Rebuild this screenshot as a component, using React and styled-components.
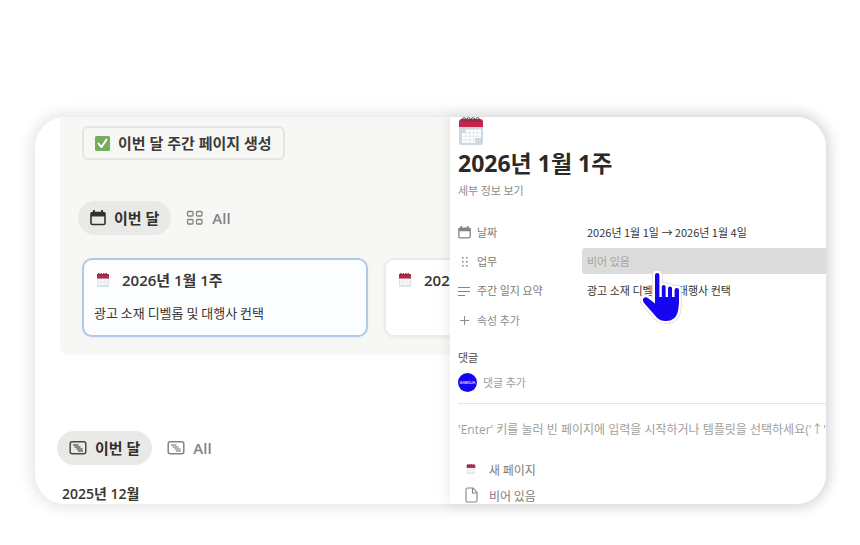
import styled, { createGlobalStyle, css } from "styled-components";

const GlobalStyle = createGlobalStyle`
    * {
        box-sizing: border-box;
    }
    body {
        margin: 0;
        background: #ffffff;
        color: #373530;
        font-family: "Open Sans", "Noto Sans CJK KR", sans-serif;
    }
    button {
        font-family: inherit;
        border: none;
        background: none;
        padding: 0;
        cursor: pointer;
    }
    h1, h2, h3, p, dl, dt, dd, ul {
        margin: 0;
        padding: 0;
    }
    svg {
        display: block;
        flex: none;
    }
`

const Page = styled.main`
    padding: 117px 34px 41px 35px;
`

const Frame = styled.div`
    display: grid;
    grid-template-columns: 415fr 376fr;
    height: 387px;
    border-radius: 30px;
    background: #ffffff;
    box-shadow: 0 0 14px 4px rgba(0, 0, 0, 0.1);
`

const Board = styled.section`
    min-width: 0;
    overflow: hidden;
    border-radius: 30px 0 0 30px;
`

const Callout = styled.div`
    margin-left: 25px;
    height: 238px;
    padding: 9px 0 0 22px;
    background: #f7f7f6;
    border-radius: 0 0 0 8px;
`

const CreateButton = styled.button`
    display: flex;
    align-items: center;
    gap: 8px;
    height: 34px;
    padding: 0 11px;
    border: 2px solid #e5e5e2;
    border-radius: 6px;
    color: #3b3a38;
    font-size: 15px;
    line-height: 20px;
    font-weight: 600;
    white-space: nowrap;
`

const Tabs = styled.div`
    display: flex;
    align-items: center;
    gap: 15px;
    margin: ${p => p.$margin};
`

const Tab = styled.button`
    display: flex;
    align-items: center;
    gap: 8px;
    height: 34px;
    color: #85837f;
    font-size: 15px;
    line-height: 20px;
    font-weight: 600;
    ${p => p.$active && css`
        padding: 0 12px;
        border-radius: 17px;
        background: #e9e9e7;
        color: #32302c;
    `}
`

const Cards = styled.div`
    display: flex;
    gap: 16px;
    margin-top: 23px;
`

const Card = styled.article`
    flex: none;
    width: 286px;
    height: 79px;
    padding: 10px;
    border: 2px solid ${p => (p.$selected ? "#afcae4" : "#ececea")};
    border-radius: 10px;
    background: ${p => (p.$selected ? "#fbfdff" : "#ffffff")};
    box-shadow: 0 1px 3px rgba(0, 0, 0, 0.05);
`

const CardTitle = styled.h3`
    display: flex;
    align-items: center;
    gap: 12px;
    padding-left: 2px;
    font-size: 15px;
    line-height: 20px;
    font-weight: 600;
    white-space: nowrap;
`

const CardText = styled.p`
    margin-top: 13px;
    font-family: "Noto Sans CJK KR", sans-serif;
    font-size: 13px;
    line-height: 20px;
`

const GroupTitle = styled.h2`
    margin-left: 27px;
    font-size: 14px;
    line-height: 20px;
    font-weight: 600;
`

const Peek = styled.aside`
    position: relative;
    min-width: 0;
    padding-left: 8px;
    border-radius: 0 30px 30px 0;
    background: #ffffff;
    box-shadow: 0 0 14px 2px rgba(0, 0, 0, 0.08);
    overflow: hidden;
    color: #7d7b77;
    font-family: "Noto Sans CJK KR", sans-serif;
`

const PageTitle = styled.h1`
    margin-top: 2px;
    color: #2b2a28;
    font-family: "Open Sans", "Noto Sans CJK KR", sans-serif;
    font-size: 23px;
    line-height: 32px;
    font-weight: 700;
    white-space: nowrap;
`

const DetailsButton = styled.button`
    display: block;
    margin-top: 1px;
    color: #8f8d89;
    font-size: 11px;
    line-height: 20px;
`

const Properties = styled.dl`
    display: grid;
    grid-template-columns: 124px 1fr;
    grid-auto-rows: 26px;
    row-gap: 3px;
    margin-top: 19px;
`

const PropertyName = styled.dt`
    display: flex;
    align-items: center;
    gap: 6px;
    font-size: 11px;
`

const PropertyValue = styled.dd`
    position: relative;
    display: flex;
    align-items: center;
    min-width: 0;
    padding-left: 5px;
    border-radius: 3px 0 0 3px;
    background: ${p => (p.$hover ? "#dcdcdc" : "none")};
    color: ${p => (p.$hover ? "#a5a39f" : "#373530")};
    font-size: 11px;
    white-space: nowrap;
`

const AddButton = styled.button`
    display: flex;
    align-items: center;
    gap: 6px;
    height: 26px;
    margin-top: 4px;
    color: #8f8d89;
    font-size: 11px;
`

const CommentTitle = styled.h2`
    margin-top: 14px;
    color: #6b6965;
    font-size: 11px;
    line-height: 20px;
    font-weight: 500;
`

const CommentRow = styled.div`
    display: flex;
    align-items: center;
    gap: 6px;
    height: 30px;
    font-size: 11px;
`

const Avatar = styled.span`
    display: flex;
    align-items: center;
    justify-content: center;
    width: 19px;
    height: 19px;
    border-radius: 50%;
    background: #1505f0;
    color: #d5d2ff;
    font-size: 4px;
    font-weight: 700;
`

const CommentInput = styled.input`
    flex: 1;
    min-width: 0;
    padding: 0;
    border: none;
    outline: none;
    background: none;
    font: inherit;
    &::placeholder {
        color: #a09e9a;
        opacity: 1;
    }
`

const Divider = styled.hr`
    height: 1px;
    margin: 6px 0 0;
    border: none;
    background: #e6e6e5;
`

const Hint = styled.p`
    margin-top: 16px;
    overflow: hidden;
    color: #a09e9a;
    font-family: "Open Sans", "Noto Sans CJK KR", sans-serif;
    font-size: 12px;
    line-height: 20px;
    white-space: nowrap;
`

const Templates = styled.ul`
    margin-top: 16px;
    list-style: none;
`

const Template = styled.button`
    display: grid;
    grid-template-columns: 26px auto;
    justify-items: center;
    align-items: center;
    gap: 5px;
    height: 26px;
    color: #7d7b77;
    font-size: 12px;
`

const Pointer = styled.svg`
    position: absolute;
    z-index: 1;
    top: 22px;
    left: 57px;
`

const CheckIcon = () => (
    <svg width="15" height="15" viewBox="0 0 15 15">
        <rect width="15" height="15" rx="1.5" fill="#77ac5f" />
        <path d="M3.5 7.6l3 3.4 5-7.4" fill="none" stroke="#ffffff" strokeWidth="2" strokeLinecap="round" strokeLinejoin="round" />
    </svg>
)

const CalendarIcon = ({ size = 16, color = "#32302c" }) => (
    <svg width={size} height={size} viewBox="0 0 16 16" fill="none" stroke={color}>
        <rect x="1" y="2.5" width="14" height="12" rx="1.5" strokeWidth="1.6" />
        <path d="M1 4.5h14" strokeWidth="4" />
        <path d="M4 0v3M12 0v3" strokeWidth="1.8" />
    </svg>
)

const GridIcon = () => (
    <svg width="18" height="16" viewBox="0 0 18 16" fill="none" stroke="#85837f" strokeWidth="1.3">
        <rect x="1.500" y="1.500" width="5.500" height="4.500" rx="1" />
        <rect x="10.500" y="1.500" width="5.500" height="4.500" rx="1" />
        <rect x="1.500" y="9.500" width="5.500" height="4.500" rx="1" />
        <rect x="10.500" y="9.500" width="5.500" height="4.500" rx="1" />
    </svg>
)

const TimelineIcon = ({ color }) => (
    <svg width="18" height="16" viewBox="0 0 18 16" fill="none" stroke={color}>
        <rect x="1.2" y="1.8" width="15.600" height="12" rx="2" strokeWidth="1.5" />
        <path d="M4 5h5.500M5.500 7h6M7.500 9h6M9 11h5" strokeWidth="2" opacity="0.6" />
    </svg>
)

const CalendarEmoji = ({ size }) => (
    <svg width={size} height={size * 28 / 26} viewBox="0 0 26 28">
        <rect x="1" y="3" width="24" height="25" rx="2.5" fill="#cfd8de" />
        <path d="M1 10V5q0-3 3-3h18q3 0 3 3v5z" fill="#c3264a" />
        <path d="M8 12.5h15v8.5h-6v5H4V16h4z" fill="#ffffff" />
        <path d="M4 15.8h19M4 19.3h19M4 22.8h13M7.8 12v14M11.6 12v14M15.4 12v14M19.2 12v9" stroke="#dbe2e6" strokeWidth="0.7" />
        <g fill="none" stroke="#5c3c49" strokeWidth="1">
            <circle cx="6" cy="2.5" r="1.8" />
            <circle cx="10.5" cy="2.5" r="1.8" />
            <circle cx="15" cy="2.5" r="1.8" />
            <circle cx="19.5" cy="2.5" r="1.8" />
        </g>
    </svg>
)

const SmallCalendar = ({ size }) => (
    <svg width={size} height={size} viewBox="0 0 14 14">
        <rect x="1" y="1" width="12" height="13" rx="1" fill="#dfe2e5" />
        <path d="M2 6h10v6H2z" fill="#f6f7f8" />
        <path d="M2 9h10M5 6v6M9 6v6" stroke="#e3e6e8" strokeWidth="0.6" />
        <path d="M1 5.500V1h12v4.500z" fill="#b02b48" />
        <path d="M2 1h10" stroke="#6d2639" strokeWidth="1.4" strokeDasharray="1.500 1" />
    </svg>
)

const DotsIcon = () => (
    <svg width="13" height="13" viewBox="0 0 13 13" fill="#85837f">
        <path d="M4 2h1.600v1.600H4zM8 2h1.600v1.600H8zM4 6h1.600v1.600H4zM8 6h1.600v1.600H8zM4 10h1.600v1.600H4zM8 10h1.600v1.600H8z" />
    </svg>
)

const LinesIcon = () => (
    <svg width="13" height="13" viewBox="0 0 13 13" stroke="#85837f" strokeWidth="1.2">
        <path d="M0 3.500h12M0 7.500h12M0 11.500h7" />
    </svg>
)

const PlusIcon = () => (
    <svg width="13" height="13" viewBox="0 0 13 13" stroke="#8f8d89">
        <path d="M2 6.5h9M6.5 2v9" />
    </svg>
)

const FileIcon = () => (
    <svg width="13" height="16" viewBox="0 0 13 16" fill="none" stroke="#85837f" strokeWidth="1.1">
        <path d="M2.5 1H8l4 4.5v8q0 1.5-1.5 1.5h-8Q1 15 1 13.500v-11Q1 1 2.500 1zM7.500 1v5H12" />
    </svg>
)

const hand = "M16 5q0-2 2.200-2t2.200 2v22h2.400V17q0-2 1.900-2t1.900 2v10H29v-8.500q0-2 2-2t2 2V27h2.600v-7q0-2 2.200-2t2.200 2v13l-.7 6q-.8 6.500-4.500 9.500-3 2.500-8 2.500-5.500 0-9-3.500L5.500 33.500q-3-4-.5-5.800 2-1.200 4.500.8L16 33.500z"

const HandPointer = () => (
    <Pointer width="44" height="56" viewBox="0 0 44 56" overflow="visible" aria-hidden="true">
        <path d={hand} fill="#c9c9d2" stroke="#c9c9d2" strokeWidth="6" strokeLinejoin="round" />
        <path d={hand} fill="#ffffff" stroke="#ffffff" strokeWidth="5" strokeLinejoin="round" />
        <path d={hand} fill="#1505f0" />
    </Pointer>
)

export default function App() {
    return <>
        <GlobalStyle />
        <Page>
            <Frame>
                <Board>
                    <Callout>
                        <CreateButton><CheckIcon />이번 달 주간 페이지 생성</CreateButton>
                        <Tabs $margin="41px 0 0 -4px">
                            <Tab $active><CalendarIcon />이번 달</Tab>
                            <Tab><GridIcon />All</Tab>
                        </Tabs>
                        <Cards>
                            <Card $selected>
                                <CardTitle><SmallCalendar size={14} />2026년 1월 1주</CardTitle>
                                <CardText>광고 소재 디벨롭 및 대행사 컨택</CardText>
                            </Card>
                            <Card>
                                <CardTitle><SmallCalendar size={14} />2026년 1월 2주</CardTitle>
                            </Card>
                        </Cards>
                    </Callout>
                    <Tabs $margin="76px 0 19px 22px">
                        <Tab $active><TimelineIcon color="#4b4945" />이번 달</Tab>
                        <Tab><TimelineIcon color="#85837f" />All</Tab>
                    </Tabs>
                    <GroupTitle>2025년 12월</GroupTitle>
                </Board>
                <Peek>
                    <CalendarEmoji size={26} />
                    <PageTitle>2026년 1월 1주</PageTitle>
                    <DetailsButton>세부 정보 보기</DetailsButton>
                    <Properties>
                        <PropertyName><CalendarIcon size={13} color="#85837f" />날짜</PropertyName>
                        <PropertyValue>2026년 1월 1일 → 2026년 1월 4일</PropertyValue>
                        <PropertyName><DotsIcon />업무</PropertyName>
                        <PropertyValue $hover>비어 있음<HandPointer /></PropertyValue>
                        <PropertyName><LinesIcon />주간 일지 요약</PropertyName>
                        <PropertyValue>광고 소재 디벨롭 및 대행사 컨택</PropertyValue>
                    </Properties>
                    <AddButton><PlusIcon />속성 추가</AddButton>
                    <CommentTitle>댓글</CommentTitle>
                    <CommentRow>
                        <Avatar>GABOJA</Avatar>
                        <CommentInput placeholder="댓글 추가" aria-label="댓글 추가" />
                    </CommentRow>
                    <Divider />
                    <Hint>'Enter' 키를 눌러 빈 페이지에 입력을 시작하거나 템플릿을 선택하세요('↑' 및 '↓' 키를 사용해 선택)</Hint>
                    <Templates>
                        <li><Template><SmallCalendar size={10} />새 페이지</Template></li>
                        <li><Template><FileIcon />비어 있음</Template></li>
                    </Templates>
                </Peek>
            </Frame>
        </Page>
    </>
}
